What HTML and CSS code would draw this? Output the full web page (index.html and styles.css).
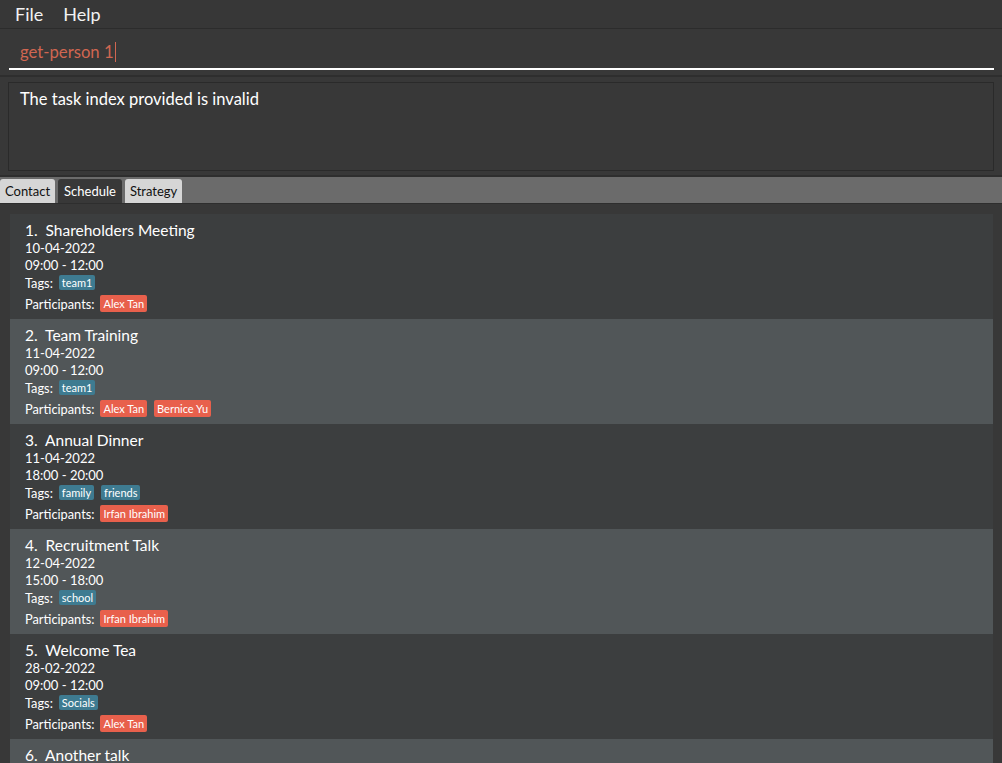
FILE: index.html
```html
<!DOCTYPE html>
<html>
<head>
<meta charset="utf-8">
<link rel="stylesheet" href="styles.css">
</head>
<body>
<div class="app">
  <div class="menubar">
    <span class="menu-item">File</span>
    <span class="menu-item">Help</span>
  </div>
  <div class="command">
    <div class="command-field"><span class="command-text">get-person 1</span><span class="caret"></span></div>
  </div>
  <div class="result-wrap">
    <div class="result">The task index provided is invalid</div>
  </div>
  <div class="tabbar">
    <div class="tab">Contact</div>
    <div class="tab active">Schedule</div>
    <div class="tab">Strategy</div>
  </div>
  <div class="list">
    <div class="card even">
      <div class="title">1.&nbsp; Shareholders Meeting</div>
      <div class="small">10-04-2022</div>
      <div class="small">09:00 - 12:00</div>
      <div class="chips"><span class="lbl">Tags:</span><span class="tag">team1</span></div>
      <div class="chips parts"><span class="lbl">Participants:</span><span class="person">Alex Tan</span></div>
    </div>
    <div class="card odd">
      <div class="title">2.&nbsp; Team Training</div>
      <div class="small">11-04-2022</div>
      <div class="small">09:00 - 12:00</div>
      <div class="chips"><span class="lbl">Tags:</span><span class="tag">team1</span></div>
      <div class="chips parts"><span class="lbl">Participants:</span><span class="person">Alex Tan</span><span class="person">Bernice Yu</span></div>
    </div>
    <div class="card even">
      <div class="title">3.&nbsp; Annual Dinner</div>
      <div class="small">11-04-2022</div>
      <div class="small">18:00 - 20:00</div>
      <div class="chips"><span class="lbl">Tags:</span><span class="tag">family</span><span class="tag">friends</span></div>
      <div class="chips parts"><span class="lbl">Participants:</span><span class="person">Irfan Ibrahim</span></div>
    </div>
    <div class="card odd">
      <div class="title">4.&nbsp; Recruitment Talk</div>
      <div class="small">12-04-2022</div>
      <div class="small">15:00 - 18:00</div>
      <div class="chips"><span class="lbl">Tags:</span><span class="tag">school</span></div>
      <div class="chips parts"><span class="lbl">Participants:</span><span class="person">Irfan Ibrahim</span></div>
    </div>
    <div class="card even">
      <div class="title">5.&nbsp; Welcome Tea</div>
      <div class="small">28-02-2022</div>
      <div class="small">09:00 - 12:00</div>
      <div class="chips"><span class="lbl">Tags:</span><span class="tag">Socials</span></div>
      <div class="chips parts"><span class="lbl">Participants:</span><span class="person">Alex Tan</span></div>
    </div>
    <div class="card odd">
      <div class="title">6.&nbsp; Another talk</div>
      <div class="small">01-05-2022</div>
      <div class="small">09:00 - 12:00</div>
    </div>
  </div>
</div>
</body>
</html>
```

FILE: styles.css
```css
* { box-sizing: border-box; }
html, body { margin: 0; padding: 0; }
body {
  background: #383838;
  font-family: "Lato", "Open Sans", sans-serif;
  color: #ffffff;
  width: 1002px;
  height: 763px;
  overflow: hidden;
}
.app { display: flex; flex-direction: column; height: 763px; }
.menubar {
  height: 29px;
  flex: none;
  background: #373737;
  border-bottom: 1px solid #2c2c2c;
  display: flex;
  align-items: center;
  padding-left: 15px;
  gap: 20px;
}
.menu-item { font-size: 18px; color: #f2f2f2; }
.command {
  height: 48px;
  flex: none;
  background: #383838;
  padding: 0 8px 0 9px;
  border-bottom: 2px solid #2e2e2e;
}
.command-field {
  height: 41px;
  border-bottom: 2px solid #ffffff;
  display: flex;
  align-items: center;
  padding-left: 11px;
  padding-top: 7px;
}
.command-text { font-size: 16.7px; color: #d06651; }
.caret { display: inline-block; width: 1px; height: 20px; background: #d06651; margin-left: 1px; }
.result-wrap {
  height: 100px;
  flex: none;
  padding: 5px 8px 4px 8px;
  border-bottom: 2px solid #2e2e2e;
}
.result {
  height: 89px;
  border: 1px solid #2a2a2a;
  padding: 6px 11px;
  font-size: 16.5px;
  color: #ffffff;
}
.tabbar {
  height: 27px;
  flex: none;
  background: #6b6b6b;
  border-bottom: 1px solid #2e2e2e;
  display: flex;
  align-items: flex-end;
  gap: 3px;
}
.tab {
  height: 24px;
  padding: 0 5px;
  background: #d6d6d6;
  color: #111111;
  font-size: 13px;
  line-height: 24px;
  border-radius: 3px 3px 0 0;
}
.tab.active { background: #383838; color: #ffffff; padding: 0 6px; }
.list {
  flex: 1;
  padding: 10px 9px 0 10px;
  background: #383838;
  overflow: hidden;
}
.card {
  height: 105px;
  padding: 6px 15px 0 15px;
}
.card.even { background: #3c3e3f; }
.card.odd { background: #515658; }
.title { font-size: 15.5px; line-height: 20px; color: #ffffff; }
.small { font-size: 13px; line-height: 17px; color: #ffffff; }
.chips { display: flex; align-items: center; font-size: 12.8px; height: 17px; }
.chips.parts { margin-top: 4px; }
.lbl { color: #ffffff; margin-right: 6px; }
.tag, .person {
  font-size: 11px;
  color: #ffffff;
  border-radius: 2px;
  line-height: 13px;
  margin-right: 7px;
}
.tag { background: #3e7b91; padding: 1px 3px; }
.person { background: #e8604c; padding: 2px 3px; }
```
